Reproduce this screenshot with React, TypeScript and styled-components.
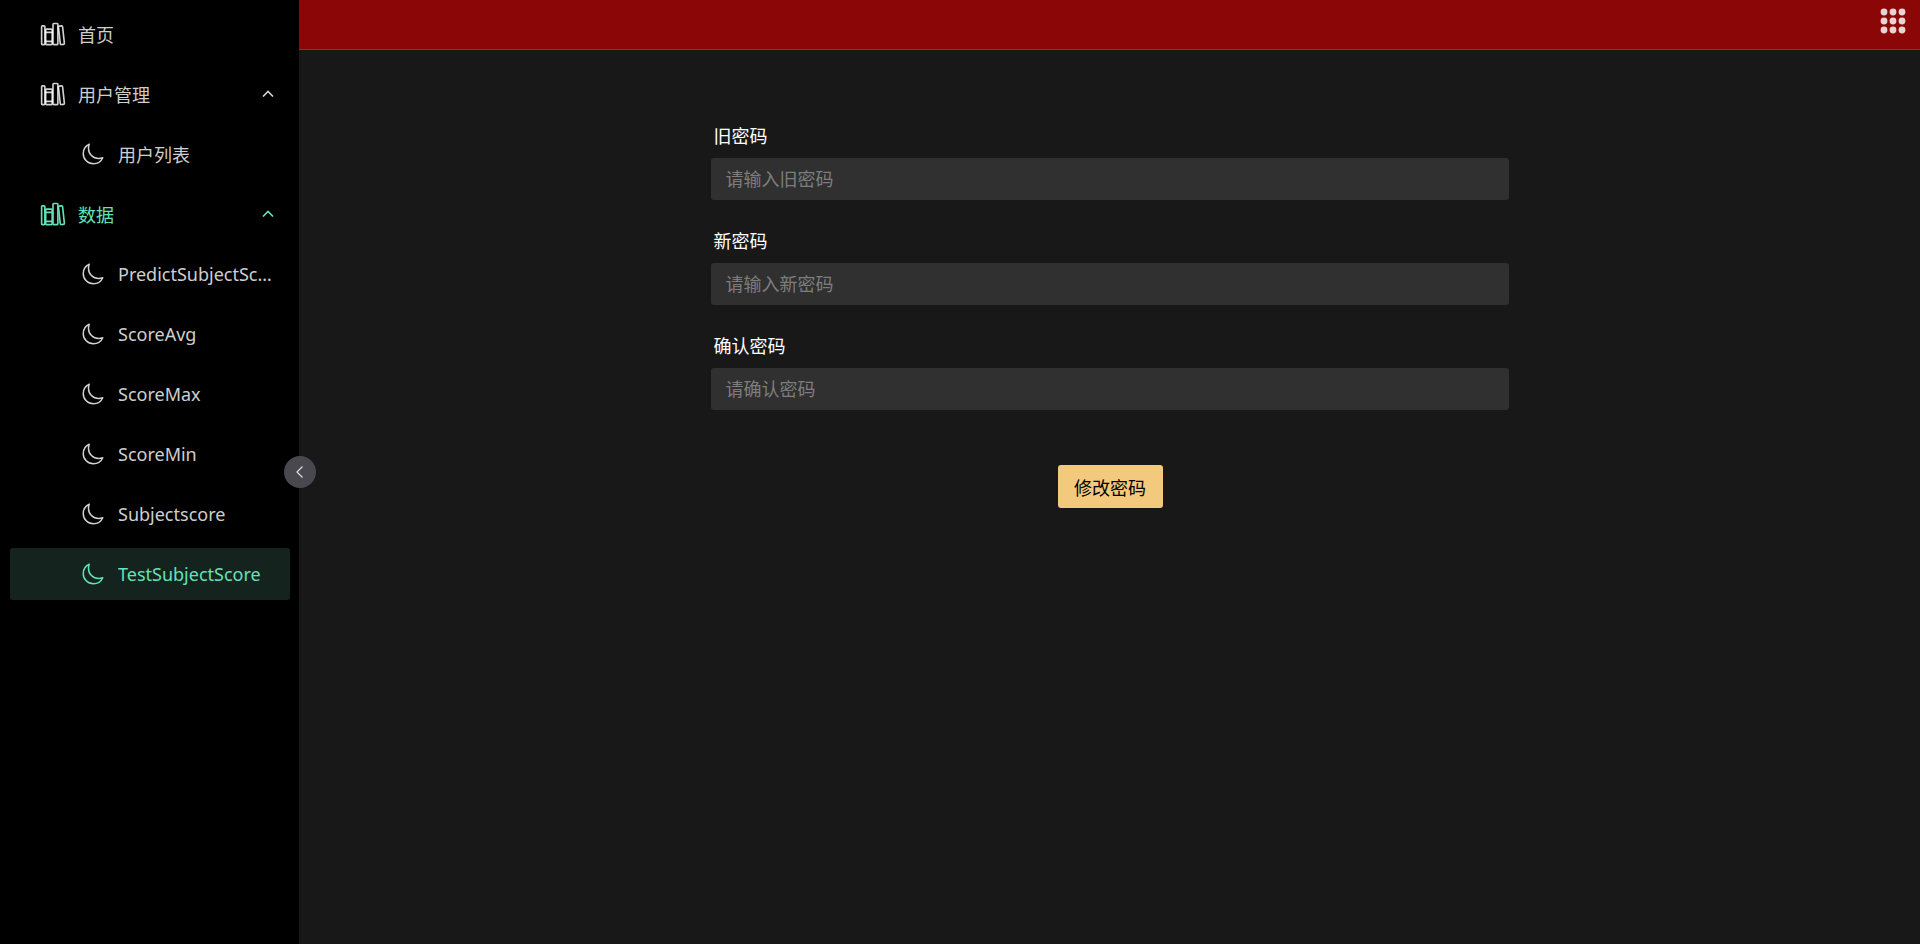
import React from "react";
import styled, { createGlobalStyle } from "styled-components";
import { IoLibraryOutline, IoMoonOutline } from "react-icons/io5";

const GREEN = "#63e2b7";
const FONT = `"Noto Sans", "Noto Sans CJK SC", sans-serif`;

const GlobalStyle = createGlobalStyle`
  html, body {
    margin: 0;
    height: 100%;
    background: #181818;
    font-family: ${FONT};
  }
  #root {
    height: 100%;
  }
`;

const Layout = styled.div`
  display: flex;
  height: 944px;
  overflow: hidden;
`;

const Sidebar = styled.aside`
  position: relative;
  flex: 0 0 299px;
  width: 299px;
  min-width: 0;
  background: #000;
  padding-top: 8px;
  box-sizing: border-box;
`;

const Menu = styled.nav`
  display: flex;
  flex-direction: column;
  gap: 8px;
`;

const MenuItem = styled.div<{ $level: number; $active?: boolean; $open?: boolean }>`
  display: flex;
  align-items: center;
  min-width: 0;
  height: 52px;
  margin: 0 9px 0 10px;
  padding: 0 18px 0 ${({ $level }) => ($level === 0 ? "32px" : "72px")};
  border-radius: 3px;
  font-size: 18px;
  color: ${({ $active, $open }) => ($active || $open ? GREEN : "rgba(255,255,255,0.82)")};
  background: ${({ $active }) => ($active ? "#14231d" : "transparent")};
`;

const ItemIcon = styled.span<{ $large?: boolean }>`
  display: flex;
  flex: 0 0 ${({ $large }) => ($large ? "26px" : "24px")};
  margin: ${({ $large }) => ($large ? "0 12px 0 -2px" : "0 13px 0 -1px")};
  font-size: ${({ $large }) => ($large ? "26px" : "24px")};
`;

const ItemLabel = styled.span`
  flex: 1;
  min-width: 0;
  white-space: nowrap;
  overflow: hidden;
  text-overflow: ellipsis;
`;

const Chevron = styled.svg`
  flex: 0 0 12px;
  width: 12px;
  height: 7px;
  margin-left: 8px;
  margin-right: -2px;
  margin-top: -2px;
  fill: none;
  stroke: currentColor;
  stroke-width: 1.6;
`;

const CollapseButton = styled.button`
  position: absolute;
  top: 456px;
  right: -17px;
  z-index: 2;
  display: flex;
  align-items: center;
  justify-content: center;
  width: 32px;
  height: 32px;
  padding: 0;
  border: none;
  border-radius: 50%;
  background: #48484e;
  color: rgba(255, 255, 255, 0.82);
`;

const Body = styled.div`
  flex: 1;
  display: flex;
  flex-direction: column;
  min-width: 0;
`;

const TopBar = styled.header`
  display: flex;
  align-items: flex-start;
  justify-content: flex-end;
  height: 42px;
  padding: 7px 13px 0 0;
  background: #8b0606;
  border-bottom: 1px solid #9c2a2a;
`;

const AppsIcon = styled.svg`
  width: 28px;
  height: 28px;
  fill: #ead3d3;
`;

const Main = styled.main`
  flex: 1;
  display: flex;
  flex-direction: column;
  align-items: center;
  padding-top: 74px;
`;

const Form = styled.form`
  display: flex;
  flex-direction: column;
  gap: 29px;
  width: 798px;
`;

const Field = styled.div`
  display: flex;
  flex-direction: column;
  gap: 10px;
`;

const Label = styled.label`
  padding-left: 3px;
  font-size: 18px;
  line-height: 24px;
  color: #fff;
`;

const Input = styled.input`
  box-sizing: border-box;
  width: 100%;
  height: 42px;
  padding: 0 15px;
  border: none;
  border-radius: 3px;
  outline: none;
  background: #303030;
  color: #fff;
  font-family: ${FONT};
  font-size: 18px;
  &::placeholder {
    color: rgba(255, 255, 255, 0.38);
  }
`;

const SubmitButton = styled.button`
  align-self: center;
  width: 105px;
  height: 43px;
  margin: 26px 0 0 1px;
  padding: 0;
  border: none;
  border-radius: 3px;
  background: #f2c97d;
  color: #000;
  font-family: ${FONT};
  font-size: 18px;
`;

const menuItems = [
  { label: "首页", level: 0 },
  { label: "用户管理", level: 0, arrow: true },
  { label: "用户列表", level: 1 },
  { label: "数据", level: 0, arrow: true, open: true },
  { label: "PredictSubjectScore", level: 1 },
  { label: "ScoreAvg", level: 1 },
  { label: "ScoreMax", level: 1 },
  { label: "ScoreMin", level: 1 },
  { label: "Subjectscore", level: 1 },
  { label: "TestSubjectScore", level: 1, active: true },
];

const fields = [
  { label: "旧密码", placeholder: "请输入旧密码" },
  { label: "新密码", placeholder: "请输入新密码" },
  { label: "确认密码", placeholder: "请确认密码" },
];

const App: React.FC = () => (
  <Layout>
    <GlobalStyle />
    <Sidebar>
      <Menu>
        {menuItems.map((item) => (
          <MenuItem key={item.label} $level={item.level} $active={item.active} $open={item.open}>
            <ItemIcon $large={item.level === 0}>
              {item.level === 0 ? <IoLibraryOutline /> : <IoMoonOutline />}
            </ItemIcon>
            <ItemLabel>{item.label}</ItemLabel>
            {item.arrow && (
              <Chevron viewBox="0 0 12 7">
                <path d="M1 6.5 L6 1.5 L11 6.5" />
              </Chevron>
            )}
          </MenuItem>
        ))}
      </Menu>
      <CollapseButton aria-label="收起">
        <svg width="16" height="16" viewBox="0 0 16 16" fill="none" stroke="currentColor" strokeWidth="1.2">
          <path d="M10.5 2.5 L5 8 L10.5 13.5" />
        </svg>
      </CollapseButton>
    </Sidebar>
    <Body>
      <TopBar>
        <AppsIcon viewBox="0 0 28 28">
          {[5, 14, 23].map((cy) =>
            [5, 14, 23].map((cx) => <circle key={`${cx}-${cy}`} cx={cx} cy={cy} r="3.4" />)
          )}
        </AppsIcon>
      </TopBar>
      <Main>
        <Form>
          {fields.map((field) => (
            <Field key={field.label}>
              <Label>{field.label}</Label>
              <Input type="password" placeholder={field.placeholder} />
            </Field>
          ))}
          <SubmitButton type="button">修改密码</SubmitButton>
        </Form>
      </Main>
    </Body>
  </Layout>
);

export default App;
